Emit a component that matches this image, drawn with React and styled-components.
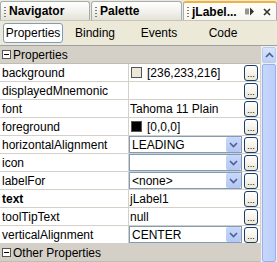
import styled, { createGlobalStyle } from "styled-components";

const Global = createGlobalStyle`
  html, body { margin: 0; padding: 0; background: #ece9d8; }
  * { box-sizing: border-box; }
`;

const sections = [
  {
    title: "Properties",
    rows: [
      { name: "background", value: "[236,233,216]", swatch: "#ece9d8", button: true },
      { name: "displayedMnemonic", value: "", button: true },
      { name: "font", value: "Tahoma 11 Plain", button: true },
      { name: "foreground", value: "[0,0,0]", swatch: "#000", button: true },
      { name: "horizontalAlignment", value: "LEADING", combo: true, button: true },
      { name: "icon", value: "", combo: true, button: true },
      { name: "labelFor", value: "<none>", combo: true, button: true },
      { name: "text", value: "jLabel1", bold: true, button: true },
      { name: "toolTipText", value: "null", button: true },
      { name: "verticalAlignment", value: "CENTER", combo: true, button: true },
    ],
  },
  { title: "Other Properties", rows: [] },
];

function Window() {
  return (
    <Frame>
      <TabStrip>
        <DocTab $w={90}><Grip />Navigator</DocTab>
        <DocTab $w={91}><Grip />Palette</DocTab>
        <DocTab $w={94} $active><Grip />jLabel...
          <TabIcons>
            <svg width="10" height="9" viewBox="0 0 10 9">
              <rect x="0.5" y="1.5" width="1" height="6" fill="#333" />
              <rect x="2.5" y="1.5" width="1" height="6" fill="#333" />
              <path d="M5 0.5 L9 4.5 L5 8.5 Z" fill="#333" />
            </svg>
            <svg width="8" height="8" viewBox="0 0 8 8">
              <path d="M1 1 L7 7 M7 1 L1 7" stroke="#333" strokeWidth="1.6" />
            </svg>
          </TabIcons>
        </DocTab>
      </TabStrip>
      <SubTabs>
        <SubTab $active>Properties</SubTab>
        <SubTab>Binding</SubTab>
        <SubTab>Events</SubTab>
        <SubTab>Code</SubTab>
      </SubTabs>
      <Body>
        <Sheet>
          {sections.map((s) => (
            <div key={s.title}>
              <Section>
                <Toggle />
                {s.title}
              </Section>
              {s.rows.map((r) => (
                <Row key={r.name}>
                  <Name $bold={r.bold}>{r.name}</Name>
                  <Value>
                    {r.combo ? (
                      <Combo>
                        <span>{r.value}</span>
                        <ComboArrow>
                          <svg width="9" height="6" viewBox="0 0 9 6">
                            <path d="M1 1 L4.5 4.5 L8 1" stroke="#4d6185" strokeWidth="1.6" fill="none" />
                          </svg>
                        </ComboArrow>
                      </Combo>
                    ) : (
                      <Plain>
                        {r.swatch && <Swatch $c={r.swatch} />}
                        {r.value}
                      </Plain>
                    )}
                    {r.button && <Dots>...</Dots>}
                  </Value>
                </Row>
              ))}
            </div>
          ))}
        </Sheet>
        <Scroll>
          <ScrollUp>
            <svg width="9" height="6" viewBox="0 0 9 6">
              <path d="M1 5 L4.5 1.5 L8 5" stroke="#4d6185" strokeWidth="1.6" fill="none" />
            </svg>
          </ScrollUp>
          <Thumb />
        </Scroll>
      </Body>
    </Frame>
  );
}

export default function App() {
  return (
    <>
      <Global />
      <Window />
    </>
  );
}

const Frame = styled.div`
  width: 277px;
  height: 262px;
  overflow: hidden;
  background: #ece9d8;
  font-family: "Liberation Sans", Arial, sans-serif;
  font-size: 12px;
  color: #000;
  display: flex;
  flex-direction: column;
`;

const TabStrip = styled.div`
  height: 21px;
  display: flex;
  gap: 1px;
  padding-top: 1px;
  background: #ece9d8;
  border-bottom: 1px solid #c8c4b4;
`;

const DocTab = styled.div`
  width: ${(p) => p.$w}px;
  flex: none;
  display: flex;
  align-items: center;
  padding-left: 3px;
  font-weight: bold;
  font-size: 12px;
  border: 1px solid #a5acb2;
  border-bottom: none;
  border-radius: 3px 3px 0 0;
  background: linear-gradient(#ffffff, #f0efe8 60%, #e4e2d8);
  ${(p) => p.$active && `
    border-top: 2px solid #f2b13a;
    background: linear-gradient(#fffefa, #f7f6f0);
  `}
`;

const Grip = styled.span`
  width: 2px;
  height: 11px;
  margin-right: 3px;
  background-image: radial-gradient(#7a7a7a 45%, transparent 50%);
  background-size: 2px 3px;
`;

const TabIcons = styled.span`
  display: flex;
  align-items: center;
  gap: 8px;
  margin-left: auto;
  margin-right: 5px;
`;

const SubTabs = styled.div`
  height: 24px;
  display: flex;
  align-items: center;
  padding: 0 3px;
`;

const SubTab = styled.div`
  width: 64px;
  height: 20px;
  display: flex;
  align-items: center;
  justify-content: center;
  font-size: 12px;
  ${(p) => p.$active && `
    width: 60px;
    background: #fff;
    border: 1px solid #7f9db9;
    border-radius: 3px;
  `}
`;

const Body = styled.div`
  flex: 1;
  display: flex;
  border-top: 1px solid #a0a0a0;
  min-height: 0;
`;

const Sheet = styled.div`
  flex: 1;
  min-width: 0;
`;

const Section = styled.div`
  height: 18px;
  display: flex;
  align-items: center;
  gap: 2px;
  padding-left: 2px;
  background: #d4d0c8;
  border-bottom: 1px solid #c0bcb2;
  font-size: 12px;
`;

const Toggle = styled.span`
  width: 9px;
  height: 9px;
  border: 1px solid #555;
  background: #fff;
  position: relative;
  &::after {
    content: "";
    position: absolute;
    left: 1px;
    right: 1px;
    top: 3px;
    height: 1px;
    background: #000;
  }
`;

const Row = styled.div`
  height: 18px;
  display: grid;
  grid-template-columns: 129px 1fr;
  background: #fff;
  border-bottom: 1px solid #d4d0c8;
`;

const Name = styled.div`
  display: flex;
  align-items: center;
  padding-left: 2px;
  border-right: 1px solid #d4d0c8;
  font-weight: ${(p) => (p.$bold ? "bold" : "normal")};
`;

const Value = styled.div`
  display: flex;
  align-items: center;
  padding-right: 2px;
  min-width: 0;
`;

const Plain = styled.div`
  flex: 1;
  display: flex;
  align-items: center;
  gap: 5px;
  padding-left: 1px;
`;

const Swatch = styled.span`
  width: 11px;
  height: 11px;
  margin-left: 1px;
  background: ${(p) => p.$c};
  border: 1px solid #555;
`;

const Combo = styled.div`
  flex: 1;
  height: 17px;
  display: flex;
  align-items: center;
  margin-right: 2px;
  padding-left: 2px;
  border: 1px solid #7f9db9;
  background: #fff;
  span { flex: 1; }
`;

const ComboArrow = styled.div`
  width: 15px;
  height: 15px;
  display: flex;
  align-items: center;
  justify-content: center;
  background: linear-gradient(#c8d8fb, #b4c8f6);
  border-radius: 2px;
`;

const Dots = styled.div`
  width: 14px;
  height: 16px;
  display: flex;
  align-items: flex-end;
  justify-content: center;
  padding-bottom: 1px;
  font-size: 9px;
  line-height: 1;
  border: 1px solid #1c3b6b;
  border-radius: 3px;
  background: linear-gradient(#fff, #ece9d8);
`;

const Scroll = styled.div`
  width: 17px;
  display: flex;
  flex-direction: column;
  gap: 1px;
  padding: 1px 1px 0 1px;
  background: #f0efe9;
  border-left: 1px solid #d4d0c8;
`;

const ScrollUp = styled.div`
  height: 16px;
  display: flex;
  align-items: center;
  justify-content: center;
  background: linear-gradient(#d9e5fd, #bcd0f8);
  border: 1px solid #b8cbf3;
  border-radius: 2px;
`;

const Thumb = styled.div`
  flex: 1;
  background: linear-gradient(90deg, #c6d6fc, #bccff9);
  border: 1px solid #98b1ec;
  border-radius: 2px;
`;
